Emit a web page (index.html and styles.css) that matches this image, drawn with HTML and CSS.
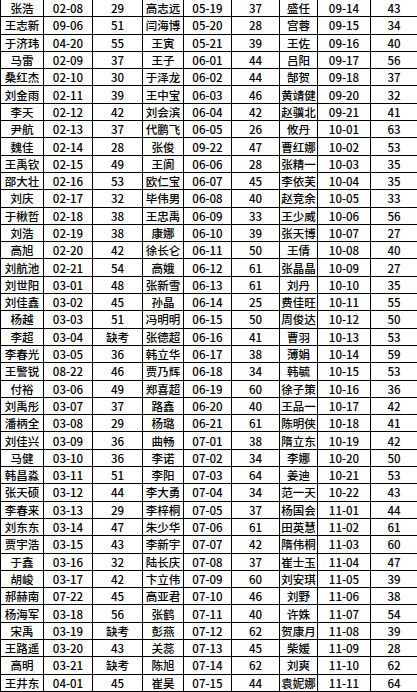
FILE: index.html
```html
<!DOCTYPE html>
<html lang="zh">
<head>
<meta charset="utf-8">
<link rel="stylesheet" href="styles.css">
</head>
<body>
<table class="grid">
<colgroup>
<col class="c1"><col class="c2"><col class="c3">
<col class="c4"><col class="c5"><col class="c6">
<col class="c7"><col class="c8"><col class="c9">
</colgroup>
<tbody>
<tr><td>张浩</td><td>02-08</td><td>29</td><td>高志远</td><td>05-19</td><td>37</td><td>盛任</td><td>09-14</td><td>43</td></tr>
<tr><td>王志新</td><td>09-06</td><td>51</td><td>闫海博</td><td>05-20</td><td>28</td><td>宫蓉</td><td>09-15</td><td>34</td></tr>
<tr><td>于济玮</td><td>04-20</td><td>55</td><td>王寅</td><td>05-21</td><td>39</td><td>王佐</td><td>09-16</td><td>40</td></tr>
<tr><td>马雷</td><td>02-09</td><td>37</td><td>王子</td><td>06-01</td><td>44</td><td>吕阳</td><td>09-17</td><td>56</td></tr>
<tr><td>桑红杰</td><td>02-10</td><td>30</td><td>于泽龙</td><td>06-02</td><td>44</td><td>郜贺</td><td>09-18</td><td>37</td></tr>
<tr><td>刘金雨</td><td>02-11</td><td>39</td><td>王中宝</td><td>06-03</td><td>46</td><td>黄靖健</td><td>09-20</td><td>32</td></tr>
<tr><td>李天</td><td>02-12</td><td>42</td><td>刘会滨</td><td>06-04</td><td>42</td><td>赵骥北</td><td>09-21</td><td>41</td></tr>
<tr><td>尹航</td><td>02-13</td><td>37</td><td>代鹏飞</td><td>06-05</td><td>26</td><td>攸丹</td><td>10-01</td><td>63</td></tr>
<tr><td>魏佳</td><td>02-14</td><td>28</td><td>张俊</td><td>09-22</td><td>47</td><td>曹红娜</td><td>10-02</td><td>53</td></tr>
<tr><td>王禹钦</td><td>02-15</td><td>49</td><td>王阆</td><td>06-06</td><td>28</td><td>张精一</td><td>10-03</td><td>35</td></tr>
<tr><td>邵大壮</td><td>02-16</td><td>53</td><td>欧仁宝</td><td>06-07</td><td>45</td><td>李依芙</td><td>10-04</td><td>35</td></tr>
<tr><td>刘庆</td><td>02-17</td><td>32</td><td>毕伟男</td><td>06-08</td><td>40</td><td>赵竞余</td><td>10-05</td><td>33</td></tr>
<tr><td>于楸哲</td><td>02-18</td><td>38</td><td>王忠禹</td><td>06-09</td><td>33</td><td>王少威</td><td>10-06</td><td>56</td></tr>
<tr><td>刘浩</td><td>02-19</td><td>38</td><td>康娜</td><td>06-10</td><td>39</td><td>张天博</td><td>10-07</td><td>27</td></tr>
<tr><td>高旭</td><td>02-20</td><td>42</td><td>徐长仑</td><td>06-11</td><td>50</td><td>王倩</td><td>10-08</td><td>40</td></tr>
<tr><td>刘航池</td><td>02-21</td><td>54</td><td>高娥</td><td>06-12</td><td>61</td><td>张晶晶</td><td>10-09</td><td>27</td></tr>
<tr><td>刘世阳</td><td>03-01</td><td>48</td><td>张新雪</td><td>06-13</td><td>61</td><td>刘丹</td><td>10-10</td><td>35</td></tr>
<tr><td>刘佳鑫</td><td>03-02</td><td>45</td><td>孙晶</td><td>06-14</td><td>25</td><td>费佳旺</td><td>10-11</td><td>55</td></tr>
<tr><td>杨越</td><td>03-03</td><td>51</td><td>冯明明</td><td>06-15</td><td>50</td><td>周俊达</td><td>10-12</td><td>50</td></tr>
<tr><td>李超</td><td>03-04</td><td>缺考</td><td>张德超</td><td>06-16</td><td>41</td><td>曹羽</td><td>10-13</td><td>53</td></tr>
<tr><td>李春光</td><td>03-05</td><td>36</td><td>韩立华</td><td>06-17</td><td>38</td><td>薄娟</td><td>10-14</td><td>59</td></tr>
<tr><td>王警锐</td><td>08-22</td><td>46</td><td>贾乃辉</td><td>06-18</td><td>34</td><td>韩毓</td><td>10-15</td><td>53</td></tr>
<tr><td>付裕</td><td>03-06</td><td>49</td><td>郑喜超</td><td>06-19</td><td>60</td><td>徐子策</td><td>10-16</td><td>36</td></tr>
<tr><td>刘禹彤</td><td>03-07</td><td>37</td><td>路鑫</td><td>06-20</td><td>40</td><td>王品一</td><td>10-17</td><td>42</td></tr>
<tr><td>潘柄全</td><td>03-08</td><td>29</td><td>杨璐</td><td>06-21</td><td>61</td><td>陈明侠</td><td>10-18</td><td>41</td></tr>
<tr><td>刘佳兴</td><td>03-09</td><td>36</td><td>曲畅</td><td>07-01</td><td>38</td><td>隋立东</td><td>10-19</td><td>42</td></tr>
<tr><td>马健</td><td>03-10</td><td>36</td><td>李诺</td><td>07-02</td><td>34</td><td>李娜</td><td>10-20</td><td>50</td></tr>
<tr><td>韩昌淼</td><td>03-11</td><td>51</td><td>李阳</td><td>07-03</td><td>64</td><td>姜迪</td><td>10-21</td><td>53</td></tr>
<tr><td>张天硕</td><td>03-12</td><td>44</td><td>李大勇</td><td>07-04</td><td>34</td><td>范一天</td><td>10-22</td><td>43</td></tr>
<tr><td>李春来</td><td>03-13</td><td>29</td><td>李梓桐</td><td>07-05</td><td>37</td><td>杨国会</td><td>11-01</td><td>44</td></tr>
<tr><td>刘东东</td><td>03-14</td><td>47</td><td>朱少华</td><td>07-06</td><td>61</td><td>田英慧</td><td>11-02</td><td>61</td></tr>
<tr><td>贾宇浩</td><td>03-15</td><td>43</td><td>李新宇</td><td>07-07</td><td>42</td><td>隋伟桐</td><td>11-03</td><td>60</td></tr>
<tr><td>于鑫</td><td>03-16</td><td>32</td><td>陆长庆</td><td>07-08</td><td>37</td><td>崔士玉</td><td>11-04</td><td>47</td></tr>
<tr><td>胡峻</td><td>03-17</td><td>42</td><td>卞立伟</td><td>07-09</td><td>60</td><td>刘安琪</td><td>11-05</td><td>39</td></tr>
<tr><td>郝赫南</td><td>07-22</td><td>45</td><td>高亚君</td><td>07-10</td><td>46</td><td>刘野</td><td>11-06</td><td>38</td></tr>
<tr><td>杨海军</td><td>03-18</td><td>56</td><td>张鹤</td><td>07-11</td><td>40</td><td>许姝</td><td>11-07</td><td>54</td></tr>
<tr><td>宋禹</td><td>03-19</td><td>缺考</td><td>彭燕</td><td>07-12</td><td>62</td><td>贺康月</td><td>11-08</td><td>39</td></tr>
<tr><td>王路遥</td><td>03-20</td><td>43</td><td>关蕊</td><td>07-13</td><td>45</td><td>柴媛</td><td>11-09</td><td>28</td></tr>
<tr><td>高明</td><td>03-21</td><td>缺考</td><td>陈旭</td><td>07-14</td><td>62</td><td>刘爽</td><td>11-10</td><td>62</td></tr>
<tr><td>王井东</td><td>04-01</td><td>45</td><td>崔昊</td><td>07-15</td><td>44</td><td>袁妮娜</td><td>11-11</td><td>64</td></tr>
</tbody>
</table>
</body>
</html>
```
FILE: styles.css
```css
html, body {
  margin: 0;
  padding: 0;
  background: #ffffff;
}
.grid {
  border-collapse: collapse;
  table-layout: fixed;
  width: 417px;
  height: 693px;
  margin-top: -1px;
  font-family: "Noto Sans CJK SC", "Liberation Sans", sans-serif;
  font-size: 11.5px;
  font-weight: 500;
  color: #000000;
}
.grid td {
  border: 1px solid #000000;
  padding: 0;
  text-align: center;
  white-space: nowrap;
  overflow: hidden;
  line-height: 14px;
}
.c1 { width: 43px; }
.c2 { width: 49px; }
.c3 { width: 50px; }
.c4 { width: 41px; }
.c5 { width: 48px; }
.c6 { width: 48px; }
.c7 { width: 38px; }
.c8 { width: 53px; }
.c9 { width: 47px; }
```
